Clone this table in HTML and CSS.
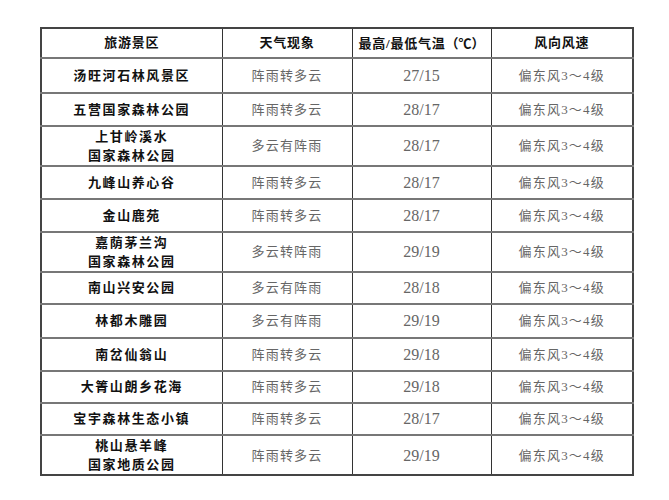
FILE: index.html
```html
<!DOCTYPE html>
<html lang="zh-CN">
<head>
<meta charset="utf-8">
<link rel="stylesheet" href="styles.css">
</head>
<body>
<table class="weather">
  <colgroup>
    <col class="c1"><col class="c2"><col class="c3"><col class="c4">
  </colgroup>
  <thead>
    <tr class="h-head">
      <th>旅游景区</th><th>天气现象</th><th>最高/最低气温<span class="cjk">（℃）</span></th><th>风向风速</th>
    </tr>
  </thead>
  <tbody>
    <tr class="h36"><td class="spot">汤旺河石林风景区</td><td>阵雨转多云</td><td class="num">27/15</td><td>偏东风3～4级</td></tr>
    <tr class="h33"><td class="spot">五营国家森林公园</td><td>阵雨转多云</td><td class="num">28/17</td><td>偏东风3～4级</td></tr>
    <tr class="h38"><td class="spot two">上甘岭溪水<br>国家森林公园</td><td>多云有阵雨</td><td class="num">28/17</td><td>偏东风3～4级</td></tr>
    <tr class="h34"><td class="spot">九峰山养心谷</td><td>阵雨转多云</td><td class="num">28/17</td><td>偏东风3～4级</td></tr>
    <tr class="h33"><td class="spot">金山鹿苑</td><td>阵雨转多云</td><td class="num">28/17</td><td>偏东风3～4级</td></tr>
    <tr class="h39"><td class="spot two">嘉荫茅兰沟<br>国家森林公园</td><td>多云转阵雨</td><td class="num">29/19</td><td>偏东风3～4级</td></tr>
    <tr class="h33"><td class="spot">南山兴安公园</td><td>多云有阵雨</td><td class="num">28/18</td><td>偏东风3～4级</td></tr>
    <tr class="h34"><td class="spot">林都木雕园</td><td>多云有阵雨</td><td class="num">29/19</td><td>偏东风3～4级</td></tr>
    <tr class="h34"><td class="spot">南岔仙翁山</td><td>阵雨转多云</td><td class="num">29/18</td><td>偏东风3～4级</td></tr>
    <tr class="h32"><td class="spot">大箐山朗乡花海</td><td>阵雨转多云</td><td class="num">29/18</td><td>偏东风3～4级</td></tr>
    <tr class="h33"><td class="spot">宝宇森林生态小镇</td><td>阵雨转多云</td><td class="num">28/17</td><td>偏东风3～4级</td></tr>
    <tr class="h38"><td class="spot two">桃山悬羊峰<br>国家地质公园</td><td>阵雨转多云</td><td class="num">29/19</td><td>偏东风3～4级</td></tr>
  </tbody>
</table>
</body>
</html>
```

FILE: styles.css
```css
html, body {
  margin: 0;
  padding: 0;
  background: #ffffff;
}
body {
  padding: 27px 0 0 40px;
  font-family: "Liberation Serif", "Noto Sans CJK SC", serif;
}
.weather {
  border-collapse: collapse;
  table-layout: fixed;
  width: 592px;
  border: 2px solid #444;
}
.c1 { width: 181px; }
.c2 { width: 130px; }
.c3 { width: 139px; }
.c4 { width: 142px; }
.weather th,
.weather td {
  padding: 0;
  text-align: center;
  vertical-align: middle;
  border-left: 1px solid #333;
  border-right: 1px solid #333;
  border-top: 2px solid #777;
  border-bottom: 2px solid #777;
  font-size: 13px;
  letter-spacing: 1.2px;
  color: #666;
  line-height: 19px;
}
.weather th {
  color: #111;
  font-weight: bold;
  letter-spacing: 0.8px;
  border-top: 2px solid #444;
}
.weather th .cjk {
  font-family: "Noto Sans CJK SC", sans-serif;
  letter-spacing: 0;
}
.weather td.spot {
  color: #111;
  font-weight: bold;
  letter-spacing: 1.6px;
}
.weather td.num {
  font-size: 16px;
  letter-spacing: 0;
}
.weather tbody tr:last-child td {
  border-bottom: 2px solid #444;
}
.h-head { height: 29.5px; }
.h32 { height: 31.5px; }
.h33 { height: 32.5px; }
.h34 { height: 33.5px; }
.h36 { height: 35.5px; }
.h38 { height: 37.5px; }
.h39 { height: 38.5px; }
```
